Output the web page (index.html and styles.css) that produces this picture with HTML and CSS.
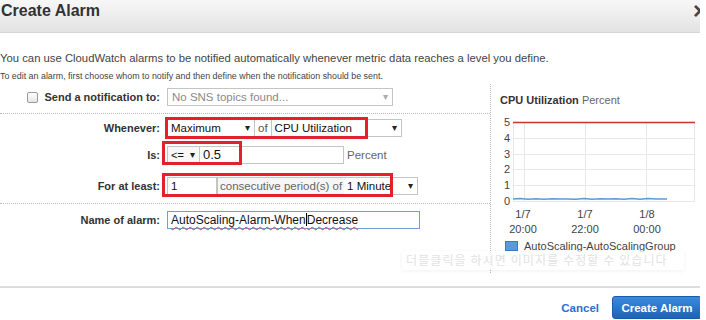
FILE: index.html
```html
<!DOCTYPE html>
<html lang="en">
<head>
  <meta charset="UTF-8">
  <title>Create Alarm</title>
  <link rel="stylesheet" href="styles.css">
</head>
<body>
  <div class="dialog">
    <div class="dialog-header">
      <span class="title">Create Alarm</span>
      <span class="close">&times;</span>
    </div>

    <p class="intro">You can use CloudWatch alarms to be notified automatically whenever metric data reaches a level you define.</p>
    <p class="intro-small">To edit an alarm, first choose whom to notify and then define when the notification should be sent.</p>

    <div class="dialog-body">
      <div class="form-col">
        <div class="row row-notify">
          <label class="label"><span class="checkbox"></span>Send a notification to:</label>
          <div class="field">
            <div class="select disabled sns">No SNS topics found...<span class="arrow">&#9662;</span></div>
          </div>
        </div>

        <div class="section">
          <div class="row">
            <label class="label">Whenever:</label>
            <div class="field">
              <div class="select stat">Maximum<span class="arrow">&#9662;</span></div>
              <div class="joiner">of</div>
              <div class="select metric">CPU Utilization<span class="arrow">&#9662;</span></div>
              <span class="mark mark-whenever"></span>
            </div>
          </div>
          <div class="row">
            <label class="label">Is:</label>
            <div class="field">
              <div class="select op">&lt;=<span class="arrow">&#9662;</span></div>
              <div class="input threshold">0.5</div>
              <span class="unit">Percent</span>
              <span class="mark mark-is"></span>
            </div>
          </div>
          <div class="row row-period">
            <label class="label">For at least:</label>
            <div class="field">
              <div class="input periods">1</div>
              <div class="joiner wide">consecutive period(s) of</div>
              <div class="select period">1 Minute<span class="arrow">&#9662;</span></div>
              <span class="mark mark-period"></span>
            </div>
          </div>
        </div>

        <div class="row row-name">
          <label class="label">Name of alarm:</label>
          <div class="field">
            <div class="input name focused"><span class="typo">AutoScaling-Alarm-When</span><span class="caret"></span><span class="typo">Decrease</span></div>
          </div>
        </div>
      </div>

      <div class="chart-col">
        <div class="chart-title"><b>CPU Utilization</b> Percent</div>
        <svg class="chart" width="200" height="128" viewBox="0 0 200 128">
          <g stroke="#e8e8e8" stroke-width="1">
            <line x1="13" y1="15.5" x2="195" y2="15.5"/>
            <line x1="13" y1="31.5" x2="195" y2="31.5"/>
            <line x1="13" y1="47.5" x2="195" y2="47.5"/>
            <line x1="13" y1="62.5" x2="195" y2="62.5"/>
            <line x1="13" y1="78.5" x2="195" y2="78.5"/>
            <line x1="13" y1="94.5" x2="195" y2="94.5"/>
            <line x1="13.5" y1="15" x2="13.5" y2="95"/>
            <line x1="24.5" y1="15" x2="24.5" y2="95"/>
            <line x1="85.5" y1="15" x2="85.5" y2="95"/>
            <line x1="146.5" y1="15" x2="146.5" y2="95"/>
            <line x1="194.5" y1="15" x2="194.5" y2="95"/>
          </g>
          <line x1="13" y1="15.5" x2="195" y2="15.5" stroke="#d0312d" stroke-width="1.5"/>
          <polyline fill="none" stroke="#5b9bd5" stroke-width="1.5" points="13,92 20,91.6 28,92.2 36,91.8 44,92.3 52,91.7 60,92.1 68,91.9 76,92.3 84,91.6 92,92.2 100,91.8 108,92.1 116,91.7 124,92.3 132,91.5 140,92.2 148,91.6 156,92.1 167,92"/>
          <g font-family="Liberation Sans, Arial, sans-serif" font-size="11" fill="#444" text-anchor="end">
            <text x="10" y="19">5</text>
            <text x="10" y="35">4</text>
            <text x="10" y="51">3</text>
            <text x="10" y="66">2</text>
            <text x="10" y="82">1</text>
            <text x="10" y="98">0</text>
          </g>
          <g font-family="Liberation Sans, Arial, sans-serif" font-size="11" fill="#444" text-anchor="middle">
            <text x="23" y="111">1/7</text>
            <text x="85" y="111">1/7</text>
            <text x="147" y="111">1/8</text>
            <text x="23" y="126">20:00</text>
            <text x="85" y="126">22:00</text>
            <text x="147" y="126">00:00</text>
          </g>
        </svg>
        <div class="legend"><span class="swatch"></span>AutoScaling-AutoScalingGroup</div>
      </div>
    </div>

    <div class="hint">더블클릭을 하시면 이미지를 수정할 수 있습니다</div>

    <div class="dialog-footer">
      <a class="cancel" href="#">Cancel</a>
      <button class="btn-primary">Create Alarm</button>
    </div>
  </div>
</body>
</html>
```

FILE: styles.css
```css
body {
  margin: 0;
  background: #ffffff;
  font-family: 'Liberation Sans', Arial, sans-serif;
  color: #333;
  overflow: hidden;
}
.dialog {
  position: relative;
  width: 700px;
  height: 320px;
  overflow: hidden;
}
.dialog-header {
  height: 32px;
  background: linear-gradient(#f7f7f7, #e3e3e3);
  border-bottom: 1px solid #d6d6d6;
  position: relative;
}
.title {
  display: block;
  font-size: 16px;
  font-weight: bold;
  color: #333;
  line-height: 22px;
  padding-left: 1px;
}
.close {
  position: absolute;
  right: -7px;
  top: 0;
  font-size: 24px;
  line-height: 22px;
  color: #444;
  font-weight: bold;
}
.intro {
  margin: 18px 0 0;
  font-size: 11.3px;
  color: #444;
  line-height: 14px;
}
.intro-small {
  margin: 6px 0 0;
  font-size: 8.9px;
  color: #444;
  line-height: 10px;
}
.dialog-body {
  display: flex;
  margin-top: 3px;
  height: 189px;
}
.form-col {
  width: 490px;
  flex-shrink: 0;
  border-right: 1px dotted #bbb;
}
.row {
  display: grid;
  grid-template-columns: 160px 1fr;
  column-gap: 7px;
  align-items: center;
  height: 26px;
}
.label {
  font-size: 11px;
  font-weight: bold;
  color: #333;
  white-space: nowrap;
  display: flex;
  justify-content: flex-end;
  align-items: center;
}
.checkbox {
  width: 9px;
  height: 9px;
  border: 1px solid #999;
  border-radius: 2px;
  background: linear-gradient(#fff, #e6e6e6);
  margin-right: 7px;
}
.row-notify .label {
  justify-content: space-between;
  padding-left: 27px;
}
.field {
  position: relative;
  display: flex;
  align-items: center;
  font-size: 11.5px;
}
.select, .input, .joiner {
  height: 16px;
  line-height: 16px;
  border: 1px solid #c4c4c4;
  background: #fff;
  color: #111;
  padding: 0 3px;
  position: relative;
  box-sizing: content-box;
  white-space: nowrap;
}
.select .arrow {
  position: absolute;
  right: 4px;
  top: 0;
  font-size: 10px;
  color: #222;
}
.select.disabled {
  color: #8a8a8a;
}
.select.disabled .arrow {
  color: #aaa;
}
.sns {
  width: 217px;
  padding-left: 4px;
}
.section {
  border-top: 1px dotted #bbb;
  border-bottom: 1px dotted #bbb;
  padding: 0 0 4px;
  margin-top: 3px;
}
.section .row {
  height: 27px;
}
.row-period {
  margin-top: 4px;
}
.stat {
  width: 80px;
}
.joiner {
  border-left: 0;
  border-right: 0;
  color: #555;
  padding: 0 3px;
  background: #fff;
}
.joiner.wide {
  background: #f6f6f6;
  border-left: 1px solid #c4c4c4;
  color: #666;
  padding: 0 2px;
}
.metric {
  width: 123px;
}
.op {
  width: 25px;
  background: #f7f7f7;
  font-size: 11px;
}
.threshold {
  width: 137px;
  border-left: 0;
  font-size: 13px;
}
.unit {
  color: #666;
  margin-left: 3px;
}
.periods {
  width: 42px;
}
.period {
  width: 67px;
  border-left: 0;
}
.mark {
  position: absolute;
  border: 3px solid #e3202d;
  box-sizing: border-box;
  pointer-events: none;
}
.mark-whenever {
  left: -2px;
  top: -2px;
  width: 203px;
  height: 22px;
}
.mark-is {
  left: -5px;
  top: -5px;
  width: 80px;
  height: 24px;
}
.mark-period {
  left: -5px;
  top: -4px;
  width: 231px;
  height: 24px;
}
.row-name {
  margin-top: 3px;
}
.name {
  width: 245px;
  border-color: #6f9fd8;
  font-size: 12px;
}
.typo {
  text-decoration: underline wavy #e0413a;
  text-decoration-thickness: 1px;
  text-underline-offset: 2px;
}
.caret {
  display: inline-block;
  width: 1px;
  height: 13px;
  background: #000;
  vertical-align: -2px;
}
.chart-col {
  padding: 10px 0 0 9px;
  flex: 1;
  min-width: 0;
}
.chart-title {
  font-size: 11px;
  color: #666;
}
.chart-title b {
  color: #333;
}
.chart {
  display: block;
  margin-top: 1px;
  overflow: visible;
}
.legend {
  margin-top: 5px;
  padding-left: 5px;
  font-size: 11px;
  line-height: 12px;
  color: #444;
  display: flex;
  align-items: center;
}
.swatch {
  width: 11px;
  height: 8px;
  background: #5b9bd5;
  border: 1px solid #3d7cc0;
  margin-right: 6px;
}
.hint {
  position: absolute;
  left: 402px;
  top: 251px;
  width: 274px;
  padding: 1px 4px 2px;
  background: rgba(255, 255, 255, 0.75);
  box-shadow: 0 1px 4px rgba(0, 0, 0, 0.06);
  font-family: 'Noto Sans CJK KR', sans-serif;
  font-size: 12px;
  color: #e2e2e2;
  letter-spacing: 1.1px;
  line-height: 16px;
}
.dialog-footer {
  position: absolute;
  left: 0;
  right: 0;
  top: 286px;
  border-top: 2px solid #dcdcdc;
  display: flex;
  justify-content: flex-end;
  align-items: center;
  gap: 13px;
  padding-top: 8px;
}
.cancel {
  color: #2b6fcf;
  font-weight: bold;
  font-size: 11.5px;
  text-decoration: none;
}
.btn-primary {
  height: 23px;
  width: 90px;
  padding: 0;
  background: linear-gradient(#3a8ade, #1e63b8);
  border: 1px solid #1b5aa8;
  border-radius: 3px;
  color: #fff;
  font-family: 'Liberation Sans', Arial, sans-serif;
  font-weight: bold;
  font-size: 11.5px;
  margin-right: -2px;
}
```
